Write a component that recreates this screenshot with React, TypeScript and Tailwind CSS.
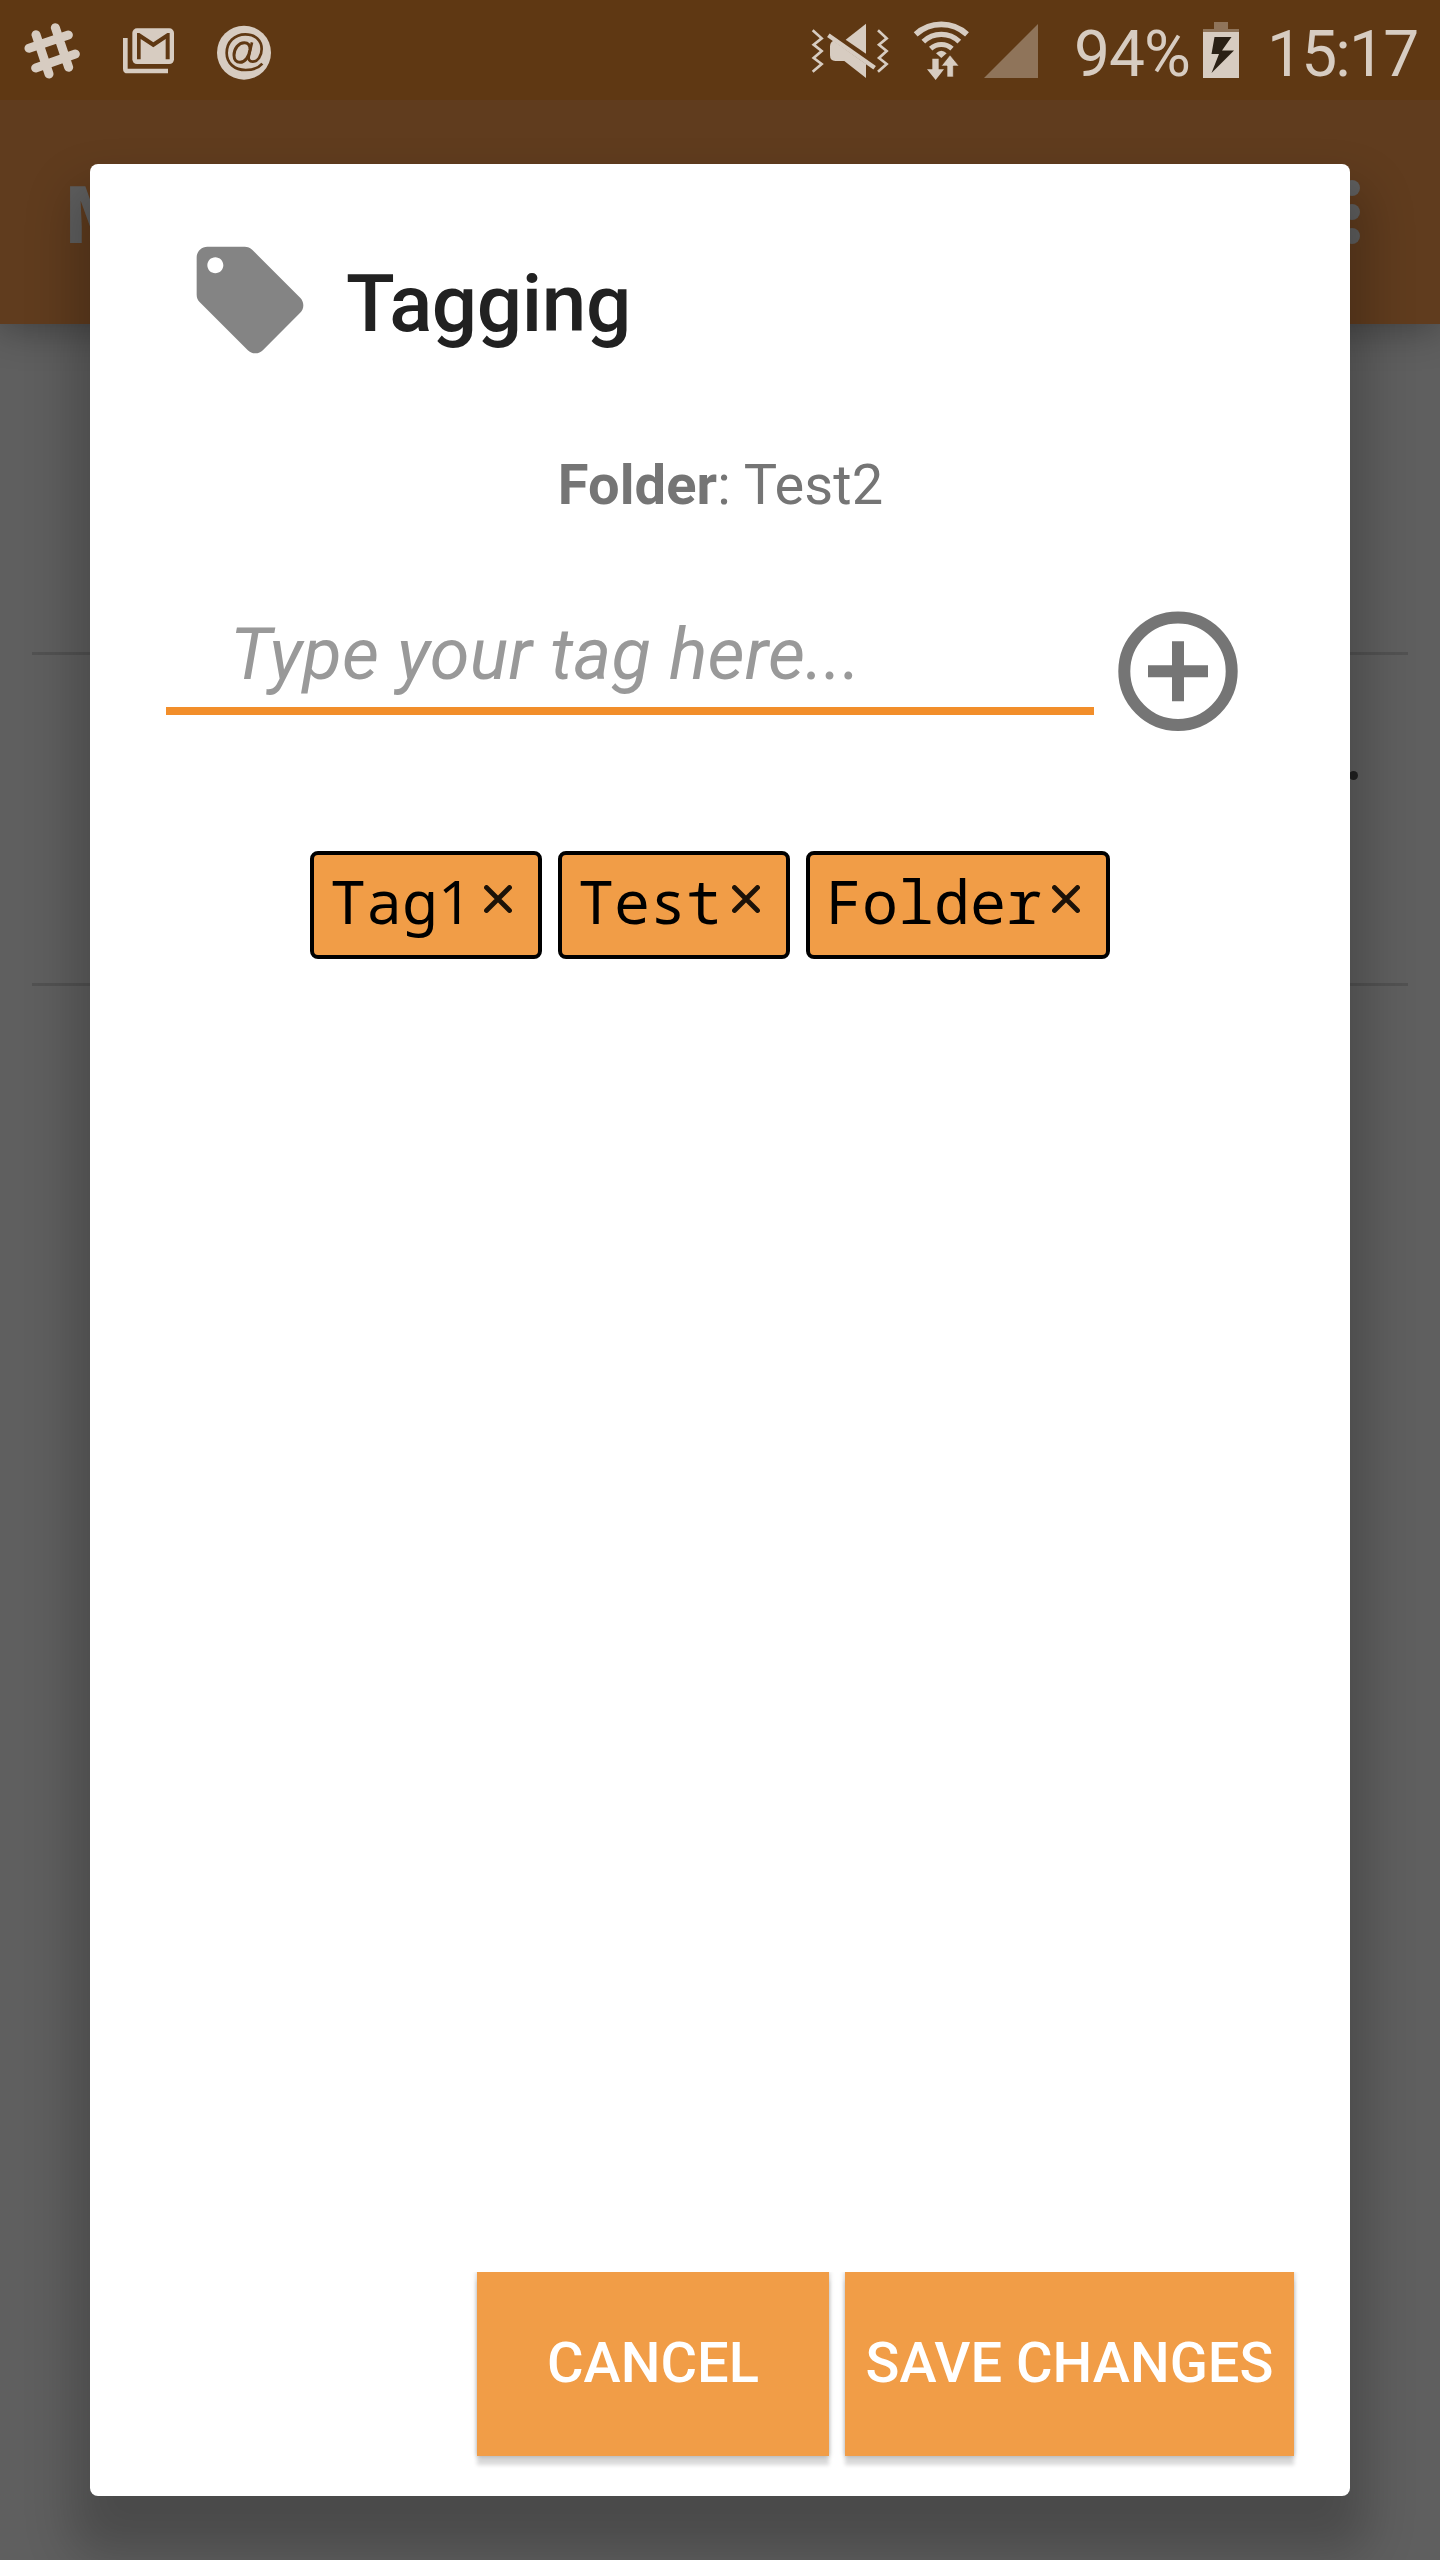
import type { ReactNode } from "react";

function SlackIcon() {
  return (
    <svg className="h-[58px] w-[56px]" viewBox="72 66 168 174" stroke="#d7ccc1" strokeWidth="27" strokeLinecap="round" fill="none">
      <path d="M108 104L147 222M166 83L206 202M87 145L205 105M107 204L226 162" />
    </svg>
  );
}

function MailStackIcon() {
  return (
    <svg className="h-[46px] w-[53px]" viewBox="366 84 159 138" fill="none">
      <path d="M376 114V206Q376 213 383 213H504" stroke="#d7ccc1" strokeWidth="14" />
      <rect x="397" y="85" width="125" height="107" rx="14" fill="#d7ccc1" />
      <path d="M411 178V99H418L460 127L502 99H509V178H497V117L460 142L422 117V178Z" fill="#5f3813" />
    </svg>
  );
}

function AtIcon() {
  return (
    <svg className="h-[55px] w-[54px]" viewBox="651 75 162 165" fill="none" stroke="#5f3813">
      <circle cx="732" cy="158" r="81" fill="#d7ccc1" stroke="none" />
      <path d="M787 191C775 205 756 210 737 210C704 210 680 190 680 159C680 126 704 103 736 103C766 103 785 121 785 147C785 168 773 185 758 185C748 185 744 178 747 166L756 127" strokeWidth="8" />
      <path d="M750 149C751 136 744 128 733 128C716 128 702 146 702 166C702 179 709 187 720 187C735 187 747 171 750 149Z" strokeWidth="9" />
    </svg>
  );
}

function MuteVibrateIcon() {
  return (
    <svg className="h-[57px] w-[78px]" viewBox="93 66 234 171" fill="#d7ccc1">
      <path d="M98 91L125 115L101 134L125 153L101 174L125 192L98 215M294 91L320 115L297 134L320 153L297 174L320 192L294 215" fill="none" stroke="#d7ccc1" strokeWidth="8" />
      <path d="M258 71V161L197 119Z" />
      <path d="M258 234L193 183H166Q150 183 150 166V140Q150 127 160 122L258 192Z" />
      <path d="M145 106L284 203" stroke="#d7ccc1" strokeWidth="13" />
    </svg>
  );
}

function WifiTransferIcon() {
  return (
    <svg className="h-[61px] w-[57px]" viewBox="399 60 171 183" fill="#d7ccc1">
      <g fill="none" stroke="#d7ccc1">
        <path d="M407 103A114 114 0 0 1 561 103" strokeWidth="17" />
        <path d="M430 125A78 78 0 0 1 538 125" strokeWidth="16" />
        <path d="M452 146A48 48 0 0 1 516 146" strokeWidth="15" />
      </g>
      <path d="M468 160Q484 145 500 160L484 174Z" />
      <path d="M457 176H476V208H492L467 240L441 208H457Z" />
      <path d="M510 165L537 198H520V231H501V198H484Z" stroke="#5f3813" strokeWidth="2" />
    </svg>
  );
}

function SignalIcon() {
  return (
    <svg className="h-[54px] w-[54px]" viewBox="0 0 54 54">
      <path d="M0 54L54 0V54Z" fill="#8f745a" />
    </svg>
  );
}

function BatteryIcon() {
  return (
    <svg className="h-[56px] w-[36px]" viewBox="0 0 36 56">
      <path d="M11 0H25V7H36V10H0V7H11Z" fill="#8f745a" />
      <path d="M0 10H36V56H0Z" fill="#d7ccc1" />
      <path d="M11.5 15H28.5L19 28.5H31L8.5 51L16 32H8.5Z" fill="#2a2015" />
    </svg>
  );
}

function StatusBar() {
  return (
    <div className="relative z-10 flex h-[100px] items-start bg-[#5f3813] pt-5 text-[64px] leading-[64px] text-[#d7ccc1]">
      <div className="mt-0.5 ml-6"><SlackIcon /></div>
      <div className="mt-2 ml-[42px]"><MailStackIcon /></div>
      <div className="mt-[5px] ml-[42px]"><AtIcon /></div>
      <div className="mt-0.5 ml-[540px]"><MuteVibrateIcon /></div>
      <div className="ml-6"><WifiTransferIcon /></div>
      <div className="mt-1 ml-[14px]"><SignalIcon /></div>
      <span className="mt-[3px] ml-[36px] w-[116px] whitespace-nowrap tracking-[-1px]">94%</span>
      <div className="mt-0.5 ml-[13px]"><BatteryIcon /></div>
      <span className="mt-[3px] ml-[28px] whitespace-nowrap tracking-[-1.8px]">15:17</span>
    </div>
  );
}

function AppBar() {
  return (
    <div className="flex h-[224px] items-start justify-between bg-[#603c1e] pr-20 pl-[65px] text-[#5f5f5f] shadow-[0_6px_36px_rgba(0,0,0,0.32)]">
      <span className="mt-[68px] text-[80px] leading-[96px] font-bold">M</span>
      <div className="mt-20 flex flex-col gap-2">
        <i className="size-4 rounded-full bg-[#5f5f5f]" />
        <i className="size-4 rounded-full bg-[#5f5f5f]" />
        <i className="size-4 rounded-full bg-[#5f5f5f]" />
      </div>
    </div>
  );
}

function TagChip({ children }: { children: ReactNode }) {
  return (
    <div className="flex h-[108px] items-start rounded-lg border-4 border-black bg-[#f19d47] pr-[26px] pl-4 text-black">
      <span className="mt-3 font-['Noto_Sans_Mono',monospace] text-[60px] leading-[68px]">{children}</span>
      <svg className="mt-[30px] ml-[10px] size-7" viewBox="0 0 28 28" stroke="#1c1208" strokeWidth="4.8" strokeLinecap="round">
        <path d="M2.5 2.5L25.5 25.5M25.5 2.5L2.5 25.5" />
      </svg>
    </div>
  );
}

const buttonClass =
  "h-[184px] bg-[#f19d47] pb-0.5 text-[56px] leading-[64px] font-medium whitespace-nowrap text-white [clip-path:inset(0_-10px_-20px_-10px)] shadow-[0_0_5px_rgba(0,0,0,0.25),0_9px_4px_rgba(0,0,0,0.15)]";

function TaggingDialog() {
  return (
    <div className="absolute top-[164px] left-[90px] z-20 flex h-[2332px] w-[1260px] flex-col rounded-lg bg-white shadow-[0_40px_48px_18px_rgba(0,0,0,0.22)]">
      <div className="mt-[72px] ml-24 flex h-32 items-start gap-8">
        <svg className="size-32" viewBox="0 0 24 24" fill="#848484">
          <path d="M21.41 11.58l-9-9C12.05 2.22 11.55 2 11 2H4c-1.1 0-2 .9-2 2v7c0 .55.22 1.05.59 1.42l9 9c.36.36.86.58 1.41.58.55 0 1.05-.22 1.41-.59l7-7c.37-.36.59-.86.59-1.41 0-.55-.23-1.06-.59-1.42zM5.5 7C4.67 7 4 6.33 4 5.5S4.67 4 5.5 4 7 4.67 7 5.5 6.33 7 5.5 7z" />
        </svg>
        <h1 className="mt-1 text-[80px] leading-[128px] font-medium tracking-[-0.4px] text-[#212121]">Tagging</h1>
      </div>
      <p className="mt-[89px] pl-px text-center text-[56px] leading-[64px] tracking-[0.1px] text-[#757575]">
        <b className="font-bold">Folder</b>: Test2
      </p>
      <div className="mt-[82px] ml-[76px] flex h-36 items-start gap-3">
        <div className="mt-[13px] h-[103px] w-[928px] border-b-[8px] border-[#f28e2a] pt-px pl-[64px] text-[72px] leading-[84px] tracking-[0.2px] whitespace-nowrap text-[#999999] italic">
          Type your tag here...
        </div>
        <svg className="size-36" viewBox="0 0 144 144" fill="none" stroke="#757575" strokeWidth="12">
          <circle cx="72" cy="72.3" r="53.7" />
          <path d="M72 42.3V102.3M42 72.3H102" />
        </svg>
      </div>
      <div className="mt-[108px] ml-[220px] flex gap-4">
        <TagChip>
          Tag<span className="font-['Open_Sans',sans-serif] tracking-[1.7px]">1</span>
        </TagChip>
        <TagChip>Test</TagChip>
        <TagChip>Folder</TagChip>
      </div>
      <div className="mt-auto mr-14 mb-10 flex justify-end gap-4">
        <button className={`${buttonClass} w-[352px]`}>CANCEL</button>
        <button className={`${buttonClass} w-[449px]`}>SAVE CHANGES</button>
      </div>
    </div>
  );
}

export default function App() {
  return (
    <div className="relative h-[2560px] w-[1440px] overflow-hidden bg-[#5f5f5f] font-['Roboto',sans-serif]">
      <StatusBar />
      <AppBar />
      <div className="mx-8 h-[331px] border-b-[3px] border-[#525252]" />
      <div className="mx-8 flex h-[331px] items-start justify-end border-b-[3px] border-[#525252] pr-[50px]">
        <i className="mt-[116px] size-[9px] rounded-full bg-[#222222]" />
      </div>
      <TaggingDialog />
    </div>
  );
}
